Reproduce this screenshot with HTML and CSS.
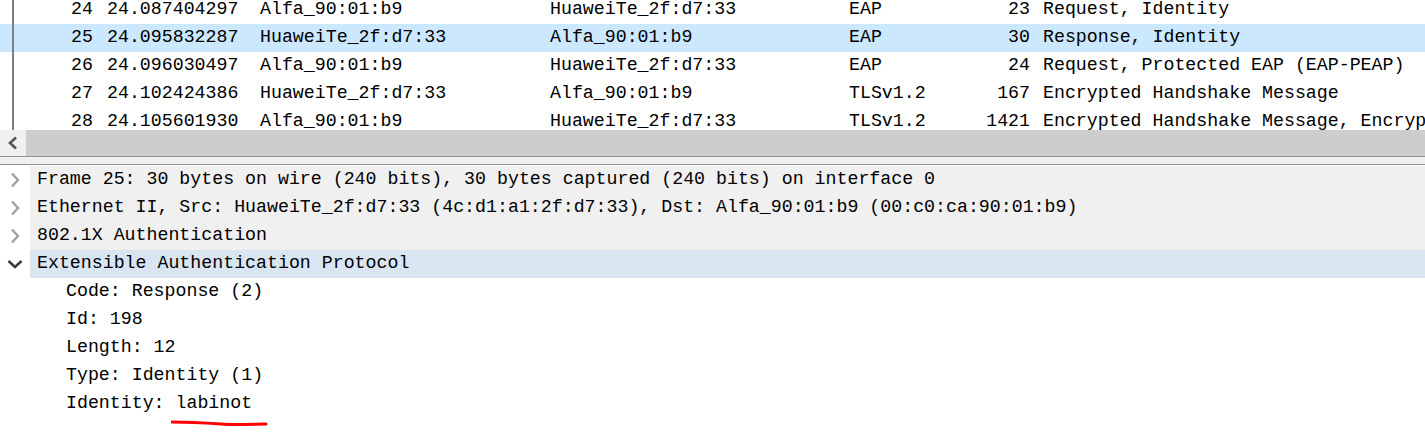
FILE: index.html
```html
<!DOCTYPE html>
<html>
<head>
<meta charset="utf-8">
<link rel="stylesheet" href="styles.css">
</head>
<body>
<div class="packets">
  <div class="prow first"><span class="rel"></span><span class="no">24</span><span class="time">24.087404297</span><span>Alfa_90:01:b9</span><span>HuaweiTe_2f:d7:33</span><span>EAP</span><span class="len">23</span><span class="info">Request, Identity</span></div>
  <div class="prow sel"><span class="rel"></span><span class="no">25</span><span class="time">24.095832287</span><span>HuaweiTe_2f:d7:33</span><span>Alfa_90:01:b9</span><span>EAP</span><span class="len">30</span><span class="info">Response, Identity</span></div>
  <div class="prow"><span class="rel"></span><span class="no">26</span><span class="time">24.096030497</span><span>Alfa_90:01:b9</span><span>HuaweiTe_2f:d7:33</span><span>EAP</span><span class="len">24</span><span class="info">Request, Protected EAP (EAP-PEAP)</span></div>
  <div class="prow"><span class="rel"></span><span class="no">27</span><span class="time">24.102424386</span><span>HuaweiTe_2f:d7:33</span><span>Alfa_90:01:b9</span><span>TLSv1.2</span><span class="len">167</span><span class="info">Encrypted Handshake Message</span></div>
  <div class="prow"><span class="rel"></span><span class="no">28</span><span class="time">24.105601930</span><span>Alfa_90:01:b9</span><span>HuaweiTe_2f:d7:33</span><span>TLSv1.2</span><span class="len">1421</span><span class="info">Encrypted Handshake Message, Encrypted Application Data</span></div>
</div>
<div class="hscroll">
  <div class="sbtn"><svg width="12" height="14" viewBox="0 0 12 14"><path d="M9 1.5 L3 7 L9 12.5" fill="none" stroke="#555" stroke-width="2.6"/></svg></div>
  <div class="thumb"></div>
</div>
<div class="splitter"></div>
<div class="tree">
  <div class="trow top"><span class="tw"><svg width="10" height="16" viewBox="0 0 10 16"><path d="M2 1.5 L8 8 L2 14.5" fill="none" stroke="#a0a0a0" stroke-width="2.4"/></svg></span><span class="tl">Frame 25: 30 bytes on wire (240 bits), 30 bytes captured (240 bits) on interface 0</span></div>
  <div class="trow top"><span class="tw"><svg width="10" height="16" viewBox="0 0 10 16"><path d="M2 1.5 L8 8 L2 14.5" fill="none" stroke="#a0a0a0" stroke-width="2.4"/></svg></span><span class="tl">Ethernet II, Src: HuaweiTe_2f:d7:33 (4c:d1:a1:2f:d7:33), Dst: Alfa_90:01:b9 (00:c0:ca:90:01:b9)</span></div>
  <div class="trow top"><span class="tw"><svg width="10" height="16" viewBox="0 0 10 16"><path d="M2 1.5 L8 8 L2 14.5" fill="none" stroke="#a0a0a0" stroke-width="2.4"/></svg></span><span class="tl">802.1X Authentication</span></div>
  <div class="trow top open"><span class="tw"><svg width="16" height="10" viewBox="0 0 16 10"><path d="M1.5 2 L8 8 L14.5 2" fill="none" stroke="#3c3c3c" stroke-width="2.6"/></svg></span><span class="tl">Extensible Authentication Protocol</span></div>
  <div class="trow child">Code: Response (2)</div>
  <div class="trow child">Id: 198</div>
  <div class="trow child">Length: 12</div>
  <div class="trow child">Type: Identity (1)</div>
  <div class="trow child">Identity: labinot</div>
</div>
<svg class="mark" width="100" height="8" viewBox="0 0 100 8"><path d="M1 3 C 20 3, 35 4, 50 5 S 85 5, 95 5" fill="none" stroke="#ff0000" stroke-width="3" stroke-linecap="round"/></svg>
</body>
</html>
```
FILE: styles.css
```css
html, body {
  margin: 0;
  padding: 0;
  background: #ffffff;
}
body {
  position: relative;
  width: 1425px;
  height: 432px;
  overflow: hidden;
  font-family: "Liberation Mono", "DejaVu Sans Mono", monospace;
  font-size: 18.25px;
  color: #000;
}
.packets {
  height: 130px;
  overflow: hidden;
}
.prow {
  display: grid;
  grid-template-columns: 14px 79px 167px 290px 299px 101px 80px 1fr;
  height: 28px;
  line-height: 26px;
  white-space: nowrap;
}
.prow.first {
  margin-top: -4px;
}
.prow.sel {
  background: #cce8ff;
}
.prow > span {
  overflow: hidden;
}
.rel {
  box-sizing: border-box;
  border-right: 2px solid #7f7f7f;
}
.no, .len {
  text-align: right;
}
.time {
  padding-left: 14px;
}
.info {
  padding-left: 13px;
}
.hscroll {
  display: flex;
  height: 26px;
}
.sbtn {
  width: 26px;
  background: #f0f0f0;
  display: flex;
  align-items: center;
  justify-content: center;
}
.thumb {
  flex: 1;
  background: #cdcdcd;
}
.splitter {
  height: 7px;
  background: #f0f0f0;
  border-top: 1px solid #8f8f8f;
  border-bottom: 1px solid #8f8f8f;
}
.tree {
  margin-top: 1px;
}
.trow {
  display: flex;
  height: 28px;
  line-height: 27px;
  white-space: nowrap;
}
.tw {
  width: 30px;
  flex: none;
  display: flex;
  align-items: center;
  justify-content: center;
  background: #ffffff;
}
.tl {
  flex: 1;
  padding-left: 7px;
  background: #f0f0f0;
}
.open .tl {
  background: #d9e6f2;
}
.child {
  padding-left: 66px;
}
.mark {
  position: absolute;
  left: 171px;
  top: 419px;
}
```
